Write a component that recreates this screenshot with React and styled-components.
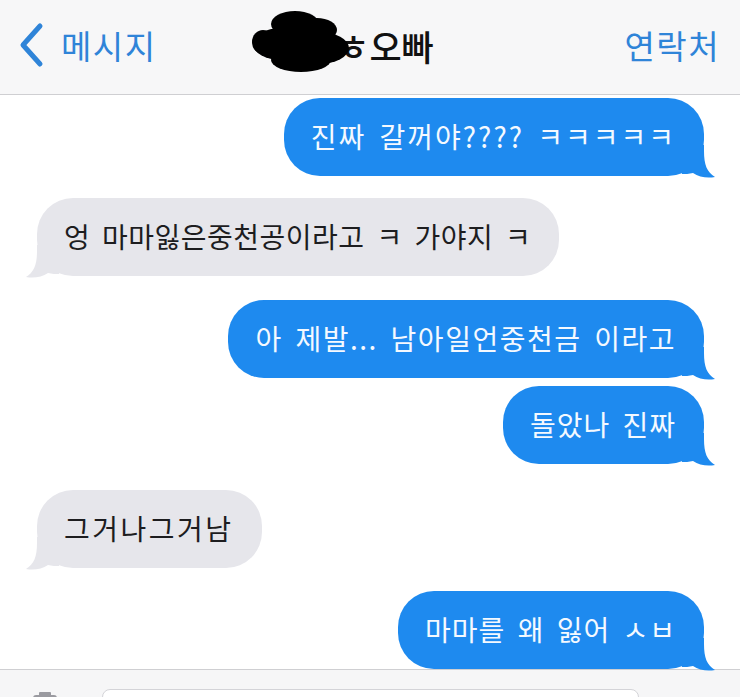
import React from "react";
import styled, { createGlobalStyle, css } from "styled-components";

const Global = createGlobalStyle`
  html, body { margin: 0; padding: 0; background: #fff; }
  body {
    font-family: "Noto Sans CJK KR", "Noto Sans", sans-serif;
    width: 740px; height: 697px; overflow: hidden;
  }
`;

const Screen = styled.div`
  width: 740px;
  height: 697px;
  display: flex;
  flex-direction: column;
  background: #fff;
  overflow: hidden;
`;

const Header = styled.header`
  height: 95px;
  flex: none;
  background: #f7f7f8;
  border-bottom: 1.5px solid #cfcfd2;
  box-sizing: border-box;
  display: grid;
  grid-template-columns: 1fr auto 1fr;
  align-items: center;
  padding: 0 20px 4px 17px;
`;

const NavButton = styled.div`
  display: flex;
  align-items: center;
  gap: 16px;
  color: #2f84d8;
  font-size: 33px;
  letter-spacing: 1.5px;
  justify-self: ${(p) => (p.$end ? "end" : "start")};
`;

const Title = styled.div`
  display: flex;
  align-items: center;
  font-size: 35px;
  font-weight: 500;
  color: #111;
  margin-right: 52px;
`;

const Blob = styled.svg`
  display: block;
  margin-right: -14px;
  margin-top: -8px;
  position: relative;
  z-index: 1;
`;

const Thread = styled.main`
  flex: 1;
  display: flex;
  flex-direction: column;
  padding: 3px 36px 0 37px;
`;

const Bubble = styled.div`
  position: relative;
  box-sizing: border-box;
  height: 78px;
  display: flex;
  align-items: center;
  padding: 0 28px 2px 27px;
  border-radius: 36px;
  font-size: 28px;
  word-spacing: 5px;
  letter-spacing: ${(p) => p.$track}px;
  white-space: nowrap;
  margin-top: ${(p) => p.$gap}px;
  color: ${(p) => (p.$me ? "#f4f9ff" : "#1d1d1f")};
  background: ${(p) => (p.$me ? "#1e8aef" : "#e6e6eb")};
  align-self: ${(p) => (p.$me ? "flex-end" : "flex-start")};
`;

const Tail = styled.svg`
  position: absolute;
  bottom: -3px;
  ${(p) =>
    p.$me
      ? css`
          right: -12px;
        `
      : css`
          left: -12px;
          transform: scaleX(-1);
        `}
`;

const Text = styled.span`
  position: relative;
  z-index: 1;
`;

const InputBar = styled.footer`
  flex: none;
  height: 30px;
  background: #f6f6f7;
  border-top: 1.5px solid #cfcfd2;
  box-sizing: border-box;
  display: flex;
  align-items: flex-start;
  padding: 0 0 0 33px;
  gap: 45px;
`;

const Camera = styled.svg`
  display: block;
  margin-top: 22px;
`;

const Field = styled.div`
  margin-top: 19px;
  width: 537px;
  height: 40px;
  background: #fff;
  border: 1.5px solid #d4d4d8;
  border-radius: 8px;
  box-sizing: border-box;
`;

const messages = [
  { me: true, gap: 0, track: 2, text: "진짜 갈꺼야???? ㅋㅋㅋㅋㅋ" },
  { me: false, gap: 22, track: 0.5, text: "엉 마마잃은중천공이라고 ㅋ 가야지 ㅋ" },
  { me: true, gap: 24, track: 1.5, text: "아 제발... 남아일언중천금 이라고" },
  { me: true, gap: 8, track: 1, text: "돌았나 진짜" },
  { me: false, gap: 26, track: 2.5, text: "그거나그거남" },
  { me: true, gap: 23, track: 1, text: "마마를 왜 잃어 ㅅㅂ" },
];

function BubbleTail({ me }) {
  return (
    <Tail $me={me} width="34" height="34" viewBox="0 0 34 34">
      <path
        d="M0 0 H22 V6 C22 20 25 27 33 32 C25 33.5 17 32 11 28 C7 29 3 29 0 29 Z"
        fill={me ? "#1e8aef" : "#e6e6eb"}
      />
    </Tail>
  );
}

export default function App() {
  return (
    <>
      <Global />
      <Screen>
        <Header>
          <NavButton>
            <svg width="28" height="46" viewBox="0 0 28 46">
              <polyline
                points="23,4 6,23 23,42"
                fill="none"
                stroke="#2f84d8"
                strokeWidth="5"
                strokeLinecap="round"
                strokeLinejoin="round"
              />
            </svg>
            메시지
          </NavButton>
          <Title>
            <Blob width="100" height="66" viewBox="0 0 100 66">
              <g fill="#000">
                <ellipse cx="44" cy="16" rx="24" ry="13" />
                <ellipse cx="66" cy="22" rx="20" ry="12" />
                <ellipse cx="30" cy="36" rx="28" ry="16" />
                <ellipse cx="68" cy="40" rx="30" ry="16" />
                <ellipse cx="50" cy="52" rx="30" ry="12" />
                <ellipse cx="12" cy="34" rx="11" ry="12" />
              </g>
            </Blob>
            <span>ㅎ오빠</span>
          </Title>
          <NavButton $end>연락처</NavButton>
        </Header>
        <Thread>
          {messages.map((m, i) => (
            <Bubble key={i} $me={m.me} $gap={m.gap} $track={m.track}>
              <BubbleTail me={m.me} />
              <Text>{m.text}</Text>
            </Bubble>
          ))}
        </Thread>
        <InputBar>
          <Camera width="24" height="12" viewBox="0 0 24 12">
            <rect x="6" y="0" width="12" height="4" rx="1" fill="#9a9aa0" />
            <rect x="0" y="3" width="24" height="12" rx="3" fill="#9a9aa0" />
          </Camera>
          <Field />
        </InputBar>
      </Screen>
    </>
  );
}
